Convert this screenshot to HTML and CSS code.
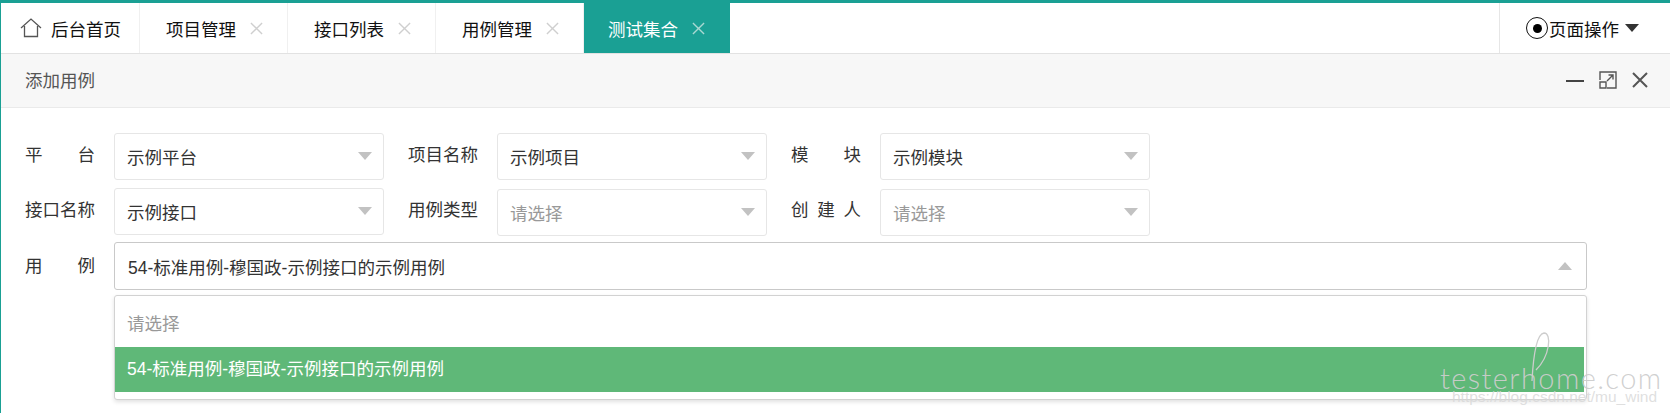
FILE: index.html
```html
<!DOCTYPE html>
<html lang="zh-CN">
<head>
    <meta charset="UTF-8">
    <meta name="viewport" content="width=device-width, initial-scale=1.0">
    <title>添加用例</title>
    <link rel="stylesheet" href="styles.css">
</head>
<body>
    <section class="Main-Frame">
        <span class="Top-Marker"></span>
        <nav class="Tab-Bar">
            <a class="Tab Tab-Home">
                <svg class="Home-Icon" viewBox="0 0 22 20" width="22" height="20" fill="none" stroke="#555" stroke-width="1.3">
                    <path d="M1 10 L11 1 L21 10"/>
                    <path d="M4.5 8 V18.5 H17.5 V8"/>
                </svg>
                后台首页
            </a>
            <a class="Tab">项目管理<svg class="Tab-Close" viewBox="0 0 14 14" width="13" height="13"><path d="M1 1 L13 13 M13 1 L1 13"/></svg></a>
            <a class="Tab">接口列表<svg class="Tab-Close" viewBox="0 0 14 14" width="13" height="13"><path d="M1 1 L13 13 M13 1 L1 13"/></svg></a>
            <a class="Tab">用例管理<svg class="Tab-Close" viewBox="0 0 14 14" width="13" height="13"><path d="M1 1 L13 13 M13 1 L1 13"/></svg></a>
            <a class="Tab Tab-Active">测试集合<svg class="Tab-Close" viewBox="0 0 14 14" width="13" height="13"><path d="M1 1 L13 13 M13 1 L1 13"/></svg></a>
            <div class="Page-Actions">
                <span class="Radio-Icon"></span>
                页面操作
                <span class="Caret-Dark"></span>
            </div>
        </nav>

        <header class="Panel-Head">
            <span>添加用例</span>
            <div class="Panel-Tools">
                <svg width="18" height="18" viewBox="0 0 18 18" fill="none" stroke="#444" stroke-width="2">
                    <path d="M0 10 H18"/>
                </svg>
                <svg width="18" height="18" viewBox="0 0 18 18" fill="none" stroke="#555" stroke-width="1.4">
                    <path d="M1 9 V1 H17 V17 H8"/>
                    <path d="M1 11 H7 V17 H1 Z"/>
                    <path d="M8 10 L14 4 M9.5 4 H14 V8.5"/>
                </svg>
                <svg width="16" height="16" viewBox="0 0 16 16" fill="none" stroke="#555" stroke-width="2">
                    <path d="M1 1 L15 15 M15 1 L1 15"/>
                </svg>
            </div>
        </header>

        <form class="Case-Form">
            <div class="Form-Row">
                <div class="Field">
                    <label class="Field-Label">平台</label>
                    <div class="Select"><span>示例平台</span><i class="Caret"></i></div>
                </div>
                <div class="Field">
                    <label class="Field-Label">项目名称</label>
                    <div class="Select"><span>示例项目</span><i class="Caret"></i></div>
                </div>
                <div class="Field">
                    <label class="Field-Label">模块</label>
                    <div class="Select"><span>示例模块</span><i class="Caret"></i></div>
                </div>
            </div>

            <div class="Form-Row">
                <div class="Field">
                    <label class="Field-Label">接口名称</label>
                    <div class="Select"><span>示例接口</span><i class="Caret"></i></div>
                </div>
                <div class="Field">
                    <label class="Field-Label">用例类型</label>
                    <div class="Select Select-Low"><span class="Placeholder">请选择</span><i class="Caret"></i></div>
                </div>
                <div class="Field">
                    <label class="Field-Label">创建人</label>
                    <div class="Select Select-Low"><span class="Placeholder">请选择</span><i class="Caret"></i></div>
                </div>
            </div>

            <div class="Field Case-Field">
                <label class="Field-Label">用例</label>
                <div class="Case-Picker">
                    <div class="Select Select-Open"><span>54-标准用例-穆国政-示例接口的示例用例</span><i class="Caret Caret-Up"></i></div>
                    <ul class="Option-List">
                        <li class="Option Placeholder">请选择</li>
                        <li class="Option Option-Selected">54-标准用例-穆国政-示例接口的示例用例</li>
                    </ul>
                </div>
            </div>
        </form>

        <div class="Watermark">
            <svg class="Watermark-Loop" width="24" height="50" viewBox="0 0 24 50" fill="none" stroke="#cdcdcd" stroke-width="1.3">
                <path d="M2 49 C3 30 6 2 14 1 C22 1 20 24 6 38"/>
            </svg>
            <span class="Watermark-Logo">testerhome.com</span>
            <span class="Watermark-Url">https://blog.csdn.net/mu_wind</span>
        </div>
    </section>
</body>
</html>
```

FILE: styles.css
```css
*{
    box-sizing: border-box;
    padding: 0;
    margin: 0;
    font-family: "Liberation Sans", "Noto Sans CJK SC", sans-serif;
}
body{
    background-color: #fff;
    overflow: hidden;
}
.Main-Frame{
    position: relative;
    height: 413px;
    border-top: 3px solid #1aa094;
    border-left: 1px solid #1aa094;
    overflow: hidden;
    color: #333;
    font-size: 17.5px;
}
.Top-Marker{
    position: absolute;
    top: -3px;
    left: 62px;
    width: 143px;
    height: 3px;
    background-color: #5fb878;
}

/* tabs */
.Tab-Bar{
    display: flex;
    height: 51px;
    border-bottom: 1px solid #e2e2e2;
    background-color: #fff;
}
.Tab{
    display: flex;
    align-items: center;
    width: 148px;
    height: 50px;
    padding-left: 26px;
    border-right: 1px solid #f0f0f0;
    color: #111;
}
.Tab-Home{
    width: 139px;
    padding-left: 19px;
    gap: 9px;
}
.Home-Icon{
    flex: none;
}
.Tab-Close{
    margin-left: 14px;
    fill: none;
    stroke: #cfcfcf;
    stroke-width: 1.5;
}
.Tab-Active{
    width: 146px;
    padding-left: 24px;
    border-right: none;
    background-color: #1aa094;
    color: #fff;
}
.Tab-Active .Tab-Close{
    stroke: #a9d8d2;
}
.Page-Actions{
    display: flex;
    align-items: center;
    width: 171px;
    height: 50px;
    margin-left: auto;
    padding-left: 26px;
    border-left: 1px solid #e6e6e6;
    color: #111;
}
.Radio-Icon{
    flex: none;
    display: flex;
    align-items: center;
    justify-content: center;
    width: 22px;
    height: 22px;
    margin-right: 1px;
    border: 1.5px solid #111;
    border-radius: 50%;
}
.Radio-Icon::after{
    content: "";
    width: 9px;
    height: 9px;
    border-radius: 50%;
    background-color: #000;
}
.Caret-Dark{
    width: 0;
    height: 0;
    margin-left: 6px;
    border-top: 8px solid #333;
    border-left: 7.5px solid transparent;
    border-right: 7.5px solid transparent;
}

/* panel head */
.Panel-Head{
    display: flex;
    align-items: center;
    justify-content: space-between;
    height: 54px;
    padding: 0 22px 2px 24px;
    background-color: #f7f7f7;
    border-bottom: 1px solid #eaeaea;
    color: #555;
}
.Panel-Tools{
    display: flex;
    align-items: center;
    gap: 15px;
}

/* form */
.Case-Form{
    padding: 25px 0 0 24px;
}
.Form-Row{
    display: flex;
    gap: 24px;
    height: 47px;
    margin-bottom: 8px;
}
.Field{
    display: flex;
    gap: 19px;
}
.Field-Label{
    flex: none;
    width: 70px;
    height: 47px;
    text-align: justify;
    text-align-last: justify;
    line-height: 44px;
    color: #333;
}
.Select{
    display: flex;
    align-items: center;
    justify-content: space-between;
    width: 270px;
    height: 47px;
    padding: 0 11px 0 12px;
    border: 1px solid #e6e6e6;
    border-radius: 3px;
    background-color: #fff;
}
.Select-Low{
    margin-top: 1px;
}
.Placeholder{
    color: #999;
}
.Caret{
    width: 0;
    height: 0;
    margin-top: -1px;
    border-top: 8px solid #c2c2c2;
    border-left: 7.5px solid transparent;
    border-right: 7.5px solid transparent;
}
.Caret-Up{
    border-top: none;
    border-bottom: 8px solid #c2c2c2;
}

.Case-Field{
    margin-top: -1px;
}
.Case-Field .Field-Label{
    line-height: 48px;
}
.Case-Picker{
    width: 1473px;
}
.Select-Open{
    width: 100%;
    height: 48px;
    border-color: #c9c9c9;
    padding: 0 14px 0 13px;
}
.Option-List{
    list-style: none;
    height: 105px;
    margin-top: 5px;
    padding: 6px 2px 7px 0;
    border: 1px solid #d2d2d2;
    border-radius: 3px;
    background-color: #fff;
    box-shadow: 0 2px 4px rgba(0,0,0,.12);
}
.Option{
    height: 45px;
    line-height: 45px;
    padding-left: 12px;
}
.Option-Selected{
    background-color: #5fb878;
    color: #fff;
}

/* picture watermark */
.Watermark{
    position: absolute;
    top: 329px;
    left: 1439px;
    width: 230px;
    height: 80px;
}
.Watermark-Loop{
    position: absolute;
    top: 0;
    left: 90px;
}
.Watermark-Logo{
    position: absolute;
    top: 29px;
    left: 0;
    font-family: "Lato", sans-serif;
    font-size: 29px;
    font-weight: 300;
    line-height: 34px;
    letter-spacing: 1.4px;
    white-space: nowrap;
    color: rgba(205,205,205,.95);
}
.Watermark-Url{
    position: absolute;
    top: 55px;
    left: 12px;
    font-size: 15.5px;
    line-height: 20px;
    white-space: nowrap;
    color: rgba(215,215,215,.8);
}
```
